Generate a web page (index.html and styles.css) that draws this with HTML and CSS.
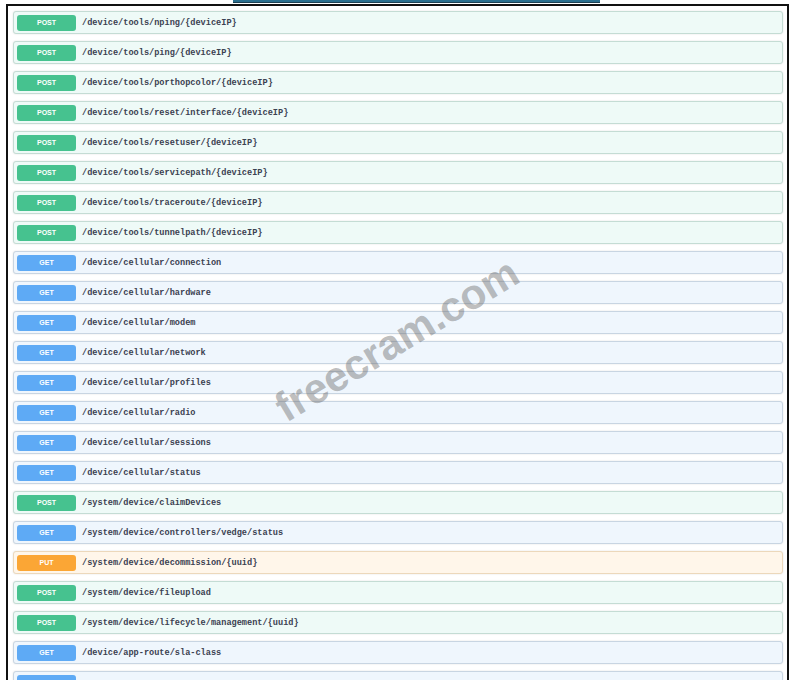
FILE: index.html
```html
<!DOCTYPE html>
<html lang="en">
<head>
  <meta charset="UTF-8">
  <title>API Operations</title>
  <link rel="stylesheet" href="styles.css">
</head>
<body>
  <div class="topbar"><div class="tab-line"></div></div>

  <div class="frame">
    <div class="op post"><span class="method">POST</span><span class="path">/device/tools/nping/{deviceIP}</span></div>
    <div class="op post"><span class="method">POST</span><span class="path">/device/tools/ping/{deviceIP}</span></div>
    <div class="op post"><span class="method">POST</span><span class="path">/device/tools/porthopcolor/{deviceIP}</span></div>
    <div class="op post"><span class="method">POST</span><span class="path">/device/tools/reset/interface/{deviceIP}</span></div>
    <div class="op post"><span class="method">POST</span><span class="path">/device/tools/resetuser/{deviceIP}</span></div>
    <div class="op post"><span class="method">POST</span><span class="path">/device/tools/servicepath/{deviceIP}</span></div>
    <div class="op post"><span class="method">POST</span><span class="path">/device/tools/traceroute/{deviceIP}</span></div>
    <div class="op post"><span class="method">POST</span><span class="path">/device/tools/tunnelpath/{deviceIP}</span></div>
    <div class="op get"><span class="method">GET</span><span class="path">/device/cellular/connection</span></div>
    <div class="op get"><span class="method">GET</span><span class="path">/device/cellular/hardware</span></div>
    <div class="op get"><span class="method">GET</span><span class="path">/device/cellular/modem</span></div>
    <div class="op get"><span class="method">GET</span><span class="path">/device/cellular/network</span></div>
    <div class="op get"><span class="method">GET</span><span class="path">/device/cellular/profiles</span></div>
    <div class="op get"><span class="method">GET</span><span class="path">/device/cellular/radio</span></div>
    <div class="op get"><span class="method">GET</span><span class="path">/device/cellular/sessions</span></div>
    <div class="op get"><span class="method">GET</span><span class="path">/device/cellular/status</span></div>
    <div class="op post"><span class="method">POST</span><span class="path">/system/device/claimDevices</span></div>
    <div class="op get"><span class="method">GET</span><span class="path">/system/device/controllers/vedge/status</span></div>
    <div class="op put"><span class="method">PUT</span><span class="path">/system/device/decommission/{uuid}</span></div>
    <div class="op post"><span class="method">POST</span><span class="path">/system/device/fileupload</span></div>
    <div class="op post"><span class="method">POST</span><span class="path">/system/device/lifecycle/management/{uuid}</span></div>
    <div class="op get"><span class="method">GET</span><span class="path">/device/app-route/sla-class</span></div>
    <!-- next operation, scrolled below the fold -->
    <div class="op get"><span class="method"></span></div>
  </div>

  <div class="watermark">freecram.com</div>
</body>
</html>
```

FILE: styles.css
```css
html, body {
  margin: 0;
  height: 100%;
  overflow: hidden;
  background: #fff;
}
body {
  position: relative;
  font-family: "Liberation Sans", Arial, sans-serif;
}
.topbar {
  height: 4px;
}
.tab-line {
  margin-left: 233px;
  width: 367px;
  height: 2px;
  background: #2b6f8e;
  border-bottom: 1px solid #1b3f52;
}
.frame {
  box-sizing: border-box;
  margin-left: 6px;
  width: 783px;
  border: 2px solid #111;
  border-bottom: none;
  padding: 5px 4px 0 5px;
  display: flex;
  flex-direction: column;
  gap: 7px;
}
.op {
  display: flex;
  align-items: center;
  height: 21px;
  padding: 0 3px;
  border: 1px solid;
  border-radius: 3px;
  box-shadow: 0 0 2px rgba(0, 0, 0, 0.12);
}
.op.post {
  background: #eefaf7;
  border-color: #c4dcd4;
}
.op.get {
  background: #eff6fd;
  border-color: #c8d5e2;
}
.op.put {
  background: #fff6ea;
  border-color: #ecd8bb;
}
.method {
  width: 59px;
  height: 16px;
  line-height: 16px;
  border-radius: 3px;
  color: #fff;
  font-size: 7px;
  font-weight: bold;
  text-align: center;
  flex-shrink: 0;
}
.post .method { background: #46c28f; }
.get .method { background: #5eaaf5; }
.put .method { background: #fba635; }
.path {
  margin-left: 6px;
  font-family: "Liberation Mono", "Courier New", monospace;
  font-size: 8.6px;
  font-weight: bold;
  color: #3b4151;
}
.watermark {
  position: absolute;
  left: 397px;
  top: 340px;
  transform: translate(-50%, -50%) rotate(-31deg);
  font-size: 42px;
  font-weight: bold;
  color: rgba(110, 110, 110, 0.45);
  white-space: nowrap;
}
```
